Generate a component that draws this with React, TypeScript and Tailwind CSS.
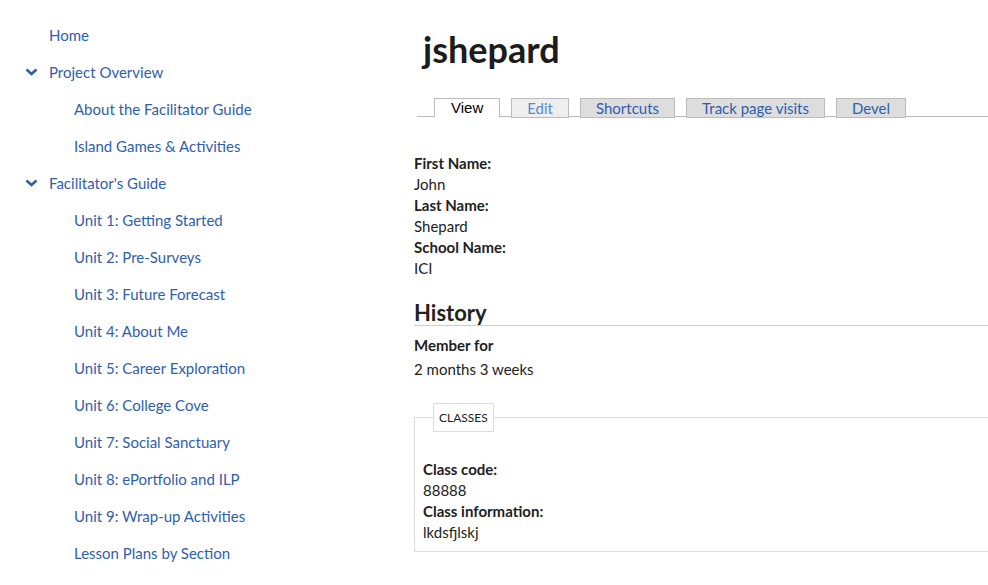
const nav = [
  { label: "Home", level: 0 },
  { label: "Project Overview", level: 0, open: true },
  { label: "About the Facilitator Guide", level: 1 },
  { label: "Island Games & Activities", level: 1 },
  { label: "Facilitator's Guide", level: 0, open: true },
  { label: "Unit 1: Getting Started", level: 1 },
  { label: "Unit 2: Pre-Surveys", level: 1 },
  { label: "Unit 3: Future Forecast", level: 1 },
  { label: "Unit 4: About Me", level: 1 },
  { label: "Unit 5: Career Exploration", level: 1 },
  { label: "Unit 6: College Cove", level: 1 },
  { label: "Unit 7: Social Sanctuary", level: 1 },
  { label: "Unit 8: ePortfolio and ILP", level: 1 },
  { label: "Unit 9: Wrap-up Activities", level: 1 },
  { label: "Lesson Plans by Section", level: 1 },
  { label: "Additional Resources", level: 1 },
];

const tabs = ["View", "Edit", "Shortcuts", "Track page visits", "Devel"];

const profile = [
  ["First Name:", "John"],
  ["Last Name:", "Shepard"],
  ["School Name:", "ICI"],
];

const Chevron = () => (
  <svg width="13" height="8" viewBox="0 0 13 8" className="ml-[1px]">
    <polyline points="1.5,1.5 6.5,6 11.5,1.5" fill="none" stroke="#2f5ead" strokeWidth="2.6" />
  </svg>
);

export default function App() {
  return (
    <div className="flex w-[988px] h-[585px] overflow-hidden bg-white text-[#222] font-['Lato',sans-serif]">
      {/* sidebar menu */}
      <nav className="w-[414px] shrink-0 pt-[16px] text-[15px] text-[#2f5ead]">
        {nav.map((item) => (
          <div
            key={item.label}
            className={`h-[37px] flex items-center ${item.level === 1 ? "pl-[74px]" : "pl-[24px]"}`}
          >
            {item.level === 0 && (
              <span className="w-[25px] flex items-center">{item.open && <Chevron />}</span>
            )}
            <a href="#" className="leading-[18px]">
              {item.label}
            </a>
          </div>
        ))}
      </nav>

      <main className="w-[600px] shrink-0">
        <h1 className="pt-[27px] pl-[9px] text-[36px] leading-[44px] font-bold text-[#1c1c1c]">jshepard</h1>

        <ul className="mt-[27px] ml-[3px] pl-[17px] flex gap-[11px] border-b border-[#bbb] h-[19px]">
          {tabs.map((tab, i) => (
            <li
              key={tab}
              className={`h-[20px] px-[15px] border border-[#bbb] text-[15px] leading-[18px] ${
                i === 0
                  ? "bg-white border-b-white text-black font-['Liberation_Sans',sans-serif] px-[16px]"
                  : i === 1
                    ? "bg-[#eeeeee] text-[#5a8ad0]"
                    : "bg-[#dddddd] text-[#2f5ead]"
              }`}
            >
              {tab}
            </li>
          ))}
        </ul>

        <div className="mt-[36px] text-[15px] leading-[21px]">
          {profile.map(([label, value]) => (
            <div key={label}>
              <div className="font-bold">{label}</div>
              <div>{value}</div>
            </div>
          ))}
        </div>

        <h2 className="mt-[22px] text-[22px] leading-[24px] font-bold border-b border-[#ccc]">History</h2>
        <div className="mt-[9px] text-[15px] leading-[21px]">
          <div className="font-bold">Member for</div>
          <div className="mt-[3px]">2 months 3 weeks</div>
        </div>

        <fieldset className="mt-[23px] border border-[#dcdcdc] px-[8px] pb-[8px]">
          <legend className="ml-[10px] px-[5px] py-[6px] border border-[#dcdcdc] text-[12px] leading-[15px] uppercase">
            Classes
          </legend>
          <div className="mt-[27px] text-[15px] leading-[21px]">
            <div className="font-bold">Class code:</div>
            <div>88888</div>
            <div className="font-bold">Class information:</div>
            <div>lkdsfjlskj</div>
          </div>
        </fieldset>
      </main>
    </div>
  );
}
